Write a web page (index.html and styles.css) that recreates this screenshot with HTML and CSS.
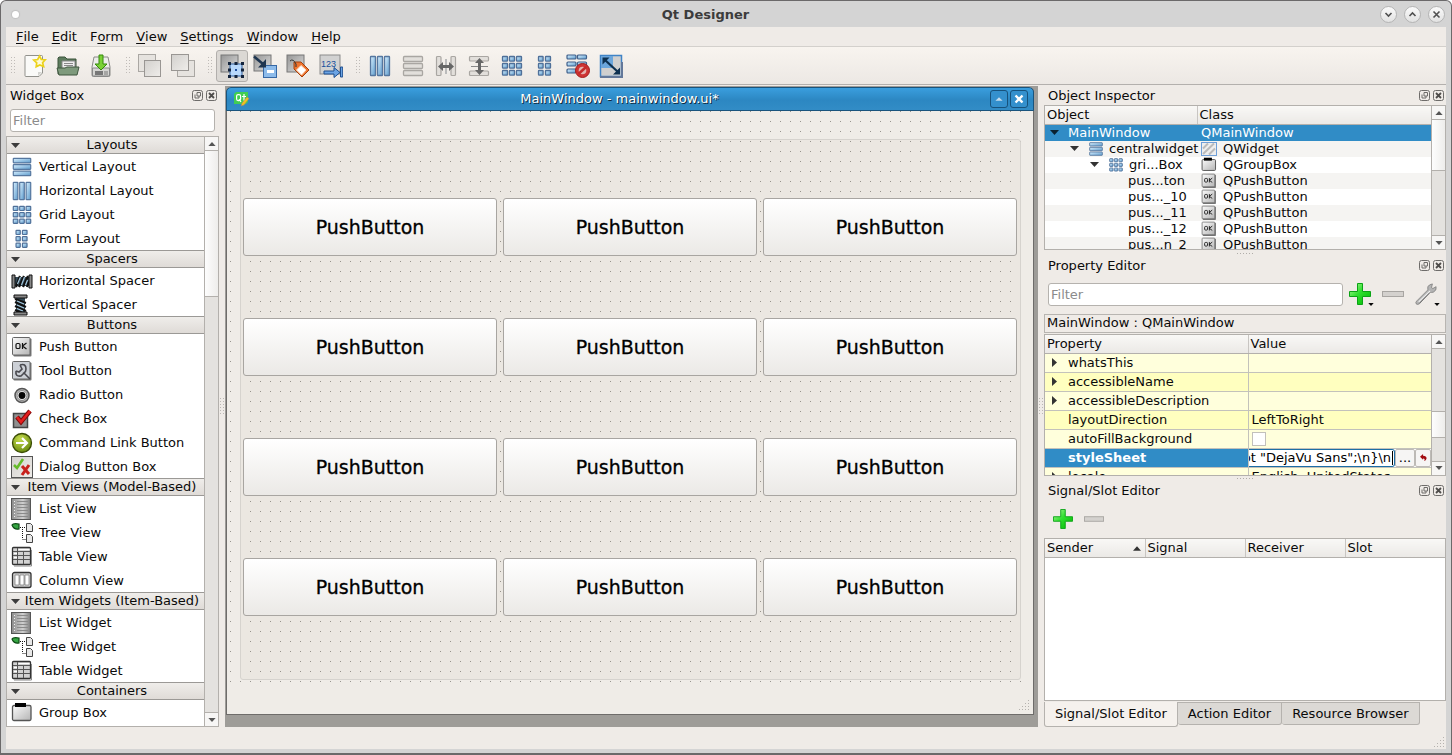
FILE: index.html
```html
<!DOCTYPE html>
<html lang="en">
<head>
<meta charset="utf-8">
<title>Qt Designer</title>
<link rel="stylesheet" href="styles.css">
</head>
<body>
<svg class="sprite" aria-hidden="true">
  <defs>
    <linearGradient id="gBlue" x1="0" y1="0" x2="1" y2="1"><stop offset="0" stop-color="#d8f0ff"/><stop offset="1" stop-color="#5c9acb"/></linearGradient>
    <linearGradient id="gGrey" x1="0" y1="0" x2="1" y2="1"><stop offset="0" stop-color="#fbfbfb"/><stop offset="1" stop-color="#b4b4b4"/></linearGradient>
    <linearGradient id="gDark" x1="0" y1="0" x2="1" y2="1"><stop offset="0" stop-color="#969696"/><stop offset="1" stop-color="#dcdcdc"/></linearGradient>
    <linearGradient id="gPale" x1="0" y1="0" x2="1" y2="1"><stop offset="0" stop-color="#d2d0cd"/><stop offset="1" stop-color="#efedea"/></linearGradient>
    <linearGradient id="gGreen" x1="0" y1="0" x2="1" y2="1"><stop offset="0" stop-color="#b9f7a0"/><stop offset=".45" stop-color="#2fe02f"/><stop offset="1" stop-color="#00b400"/></linearGradient>
    <linearGradient id="gList" x1="0" y1="0" x2="1" y2="0"><stop offset="0" stop-color="#8a8a8a"/><stop offset=".6" stop-color="#d0d0d0"/><stop offset="1" stop-color="#7c7c7c"/></linearGradient>
    <radialGradient id="gLime" cx=".4" cy=".3" r=".8"><stop offset="0" stop-color="#c6dc4e"/><stop offset="1" stop-color="#5f8207"/></radialGradient>
  </defs>
  <symbol id="i-vlayout" viewBox="-1 -1 24 24"><g fill="url(#gBlue)" stroke="#56779f" stroke-width="1.3"><rect x="1.500" y="1.500" width="19" height="5" rx=".6"/><rect x="1.500" y="8.500" width="19" height="5" rx=".6"/><rect x="1.500" y="15.500" width="19" height="5" rx=".6"/></g></symbol>
  <symbol id="i-hlayout" viewBox="-1 -1 24 24"><g fill="url(#gBlue)" stroke="#56779f" stroke-width="1.3"><rect x="1.500" y="1.500" width="5" height="19" rx=".6"/><rect x="8.500" y="1.500" width="5" height="19" rx=".6"/><rect x="15.500" y="1.500" width="5" height="19" rx=".6"/></g></symbol>
  <symbol id="i-grid" viewBox="-1 -1 24 24"><g fill="url(#gBlue)" stroke="#4f7099" stroke-width="1.3"><rect x="1.500" y="1.500" width="5" height="4.600" rx=".6"/><rect x="8.500" y="1.500" width="5" height="4.600" rx=".6"/><rect x="15.500" y="1.500" width="5" height="4.600" rx=".6"/><rect x="1.500" y="8.500" width="5" height="4.600" rx=".6"/><rect x="8.500" y="8.500" width="5" height="4.600" rx=".6"/><rect x="15.500" y="8.500" width="5" height="4.600" rx=".6"/><rect x="1.500" y="15.500" width="5" height="4.600" rx=".6"/><rect x="8.500" y="15.500" width="5" height="4.600" rx=".6"/><rect x="15.500" y="15.500" width="5" height="4.600" rx=".6"/></g></symbol>
  <symbol id="i-form" viewBox="-1 -1 24 24"><g fill="url(#gBlue)" stroke="#4f7099" stroke-width="1.3"><rect x="4.500" y="1.500" width="4.600" height="4.600" rx=".6"/><rect x="11.500" y="1.500" width="5" height="4.600" rx=".6"/><rect x="4.500" y="8.500" width="4.600" height="4.600" rx=".6"/><rect x="11.500" y="8.500" width="5" height="4.600" rx=".6"/><rect x="4.500" y="15.500" width="4.600" height="4.600" rx=".6"/><rect x="11.500" y="15.500" width="5" height="4.600" rx=".6"/></g></symbol>
  <symbol id="i-vlayout-off" viewBox="-1 -1 24 24"><g fill="#e2dfdb" stroke="#a9a6a2" stroke-width="1.3"><rect x="1.500" y="1.500" width="19" height="5" rx="1"/><rect x="1.500" y="8.500" width="19" height="5" rx="1"/><rect x="1.500" y="15.500" width="19" height="5" rx="1"/></g></symbol>
  <symbol id="i-hsplit" viewBox="-1 -1 24 24"><g fill="#e2dfdb" stroke="#a9a6a2" stroke-width="1.2"><rect x="1.500" y="1.500" width="4.500" height="19" rx="1"/><rect x="16" y="1.500" width="4.500" height="19" rx="1"/></g><path d="M10.500 4v15M11.500 4v15" stroke="#bbb" fill="none"/><path d="M3 11.500l5-4.500v3h6V7l5 4.500-5 4.500v-3H8v3z" fill="#666"/></symbol>
  <symbol id="i-vsplit" viewBox="-1 -1 24 24"><g fill="#e2dfdb" stroke="#a9a6a2" stroke-width="1.2"><rect x="1.500" y="1.500" width="19" height="4.500" rx="1"/><rect x="1.500" y="16" width="19" height="4.500" rx="1"/></g><path d="M3 11.500h17" stroke="#888" fill="none"/><path d="M11.500 3L7 8h3v7H7l4.500 5 4.500-5h-3V8h3z" fill="#666"/></symbol>
  <symbol id="i-break" viewBox="0 0 24 24"><g fill="url(#gBlue)" stroke="#3f5f8a" stroke-width="1.2"><rect x="1" y="1" width="9" height="4" rx="1"/><rect x="11.500" y="1" width="9" height="4" rx="1"/><rect x="1" y="8" width="9" height="4" rx="1"/><rect x="11.500" y="8" width="9" height="4" rx="1"/><rect x="1" y="15" width="9" height="4" rx="1"/></g><circle cx="16.500" cy="16.500" r="7" fill="#cf3434" stroke="#a31c1c"/><circle cx="16.500" cy="16.500" r="3.800" fill="#e3b4b0"/><path d="M12.500 20l8-7.500" stroke="#c42b2b" stroke-width="2.600"/></symbol>
  <symbol id="i-adjust" viewBox="0 0 24 24"><rect x="1.500" y="1.500" width="21" height="21" fill="#cfcfcf" stroke="#3f83c6" stroke-width="1.500"/><path d="M1 23h22V8" fill="none" stroke="#63789a" stroke-width="2"/><rect x="2" y="2" width="12" height="12" fill="#6ba6dc"/><path d="M6 6l13 12" stroke="#0d3050" stroke-width="2.200"/><path d="M3.500 3.500h7l-7 7zM21 20.500h-7l7-7z" fill="#0d3050"/></symbol>
  <symbol id="i-new" viewBox="0 0 24 24"><path d="M3 1.500h15.500q1 0 1 1V19l-3.500 3.500H3q-1 0-1-1v-19q0-1 1-1z" fill="#fafaf8" stroke="#91918c"/><path d="M19 18h-4v4z" fill="#d4d4d0"/><path d="M16.500 2l1.800 3.500 3.900.2-2.600 3 1 3.800-3.800-1.500-3.600 1.800.5-4-2.900-2.700 3.900-.6z" fill="#fffbd6" stroke="#ecd21a" stroke-width="1.700"/></symbol>
  <symbol id="i-open" viewBox="0 0 24 24"><path d="M2 20V4l1-1h6l2 2h9v15z" fill="#5e7c5e" stroke="#3b533b"/><path d="M6 7h13v9H6z" fill="#eee" stroke="#888"/><path d="M8 9.500h9M8 11.500h9" stroke="#888"/><path d="M1 14h8l2-1h12l-2 8H3z" fill="#7e9a7c" stroke="#3f573f"/></symbol>
  <symbol id="i-save" viewBox="0 0 24 24"><path d="M5 3h14l2 10v8q0 1.500-1.500 1.500h-15Q3 22.500 3 21v-8z" fill="#ececea" stroke="#8b8b88"/><path d="M3.500 14h17v8h-17z" fill="#d5d5d2" stroke="#888"/><rect x="6" y="17" width="8" height="4" fill="#777"/><path d="M16 17v4M18 17v4" stroke="#777"/><path d="M10 1h4v9h4l-6 6-6-6h4z" fill="#7ad136" stroke="#358a0b"/></symbol>
  <symbol id="i-raise" viewBox="0 0 24 24"><rect x=".500" y=".500" width="17" height="17" fill="#e6e3df" stroke="#aaa7a3"/><rect x="6.500" y="6.500" width="16" height="16" fill="url(#gPale)" stroke="#999693"/></symbol>
  <symbol id="i-lower" viewBox="0 0 24 24"><rect x="6.500" y="6.500" width="17" height="16" fill="#e6e3df" stroke="#aaa7a3"/><rect x=".500" y=".500" width="17" height="16" fill="url(#gPale)" stroke="#999693"/></symbol>
  <symbol id="i-widgets" viewBox="0 0 24 24"><rect x="1" y="1" width="17" height="17" fill="url(#gDark)" stroke="#777"/><rect x="10" y="10" width="12" height="12" fill="#b8d8fb" stroke="#3465a4"/><g fill="#14243c"><rect x="8" y="8" width="3" height="3"/><rect x="14.500" y="8" width="3" height="3"/><rect x="21" y="8" width="3" height="3"/><rect x="8" y="14.500" width="3" height="3"/><rect x="21" y="14.500" width="3" height="3"/><rect x="8" y="21" width="3" height="3"/><rect x="14.500" y="21" width="3" height="3"/><rect x="21" y="21" width="3" height="3"/></g><rect x="15" y="15" width="2" height="2" fill="#2050a0"/></symbol>
  <symbol id="i-signals" viewBox="0 0 24 24"><rect x="1" y="1" width="17" height="16" fill="url(#gDark)" stroke="#777"/><rect x="10.500" y="11.500" width="13" height="12" fill="#8dbbea" stroke="#3668a5"/><path d="M14 17.500h7" stroke="#fff" stroke-width="3"/><path d="M1 2.500l9 7.500" stroke="#1e3550" stroke-width="2.500"/><path d="M13 5v8.500H5z" fill="#1e3550"/></symbol>
  <symbol id="i-buddies" viewBox="0 0 24 24"><rect x="1" y="1" width="17" height="17" fill="url(#gDark)" stroke="#777"/><path d="M8 8h7l8 8-7 7-8-8z" fill="#ef7430" stroke="#a4410d"/><path d="M15 11.500l5 4.500-4.500 5-5-5z" fill="#fff" stroke="#fbd9bf"/><path d="M4 7q3-3 6 3v3" fill="none" stroke="#333"/></symbol>
  <symbol id="i-taborder" viewBox="0 0 24 24"><rect x="1" y="1" width="20" height="19" fill="#d2d2d2" stroke="#8b8b8b"/><text x="2" y="13" font-size="9" fill="#174f9c" font-family="Liberation Sans">123</text><path d="M5 17h10v-3.500l6 5-6 5V20H5zM21.500 13h2.200v10h-2.200z" fill="#6ba4e4" stroke="#1f4f8f"/></symbol>
  <symbol id="i-hspacer" viewBox="0 0 22 22"><path d="M4 7h14v9H4z" fill="#334955"/><path d="M5 17l4-11M8 17l5-11M12 17l5-11M16 17l2-6" stroke="#111" stroke-width="2.200"/><path d="M6.500 14l3-7M10.500 15l3-8M14.500 15l2-5" stroke="#a5c8df" stroke-width="1.200"/><path d="M1 5h3v13H1zM18 5h3v13h-3z" fill="#888" stroke="#111"/></symbol>
  <symbol id="i-vspacer" viewBox="0 0 22 22"><path d="M5 4h9v14H5z" fill="#334955"/><path d="M4 5l11 4M4 8l11 5M4 12l11 5M4 16l8 3" stroke="#111" stroke-width="2"/><path d="M6 7l7 3M6 11l7 3M6 14.500l6 2.500" stroke="#a5c8df" stroke-width="1.200"/><path d="M3 1h13v3H3zM3 18h13v3H3z" fill="#888" stroke="#111"/></symbol>
  <symbol id="i-ok" viewBox="0 0 22 22"><rect x="2.500" y="2.500" width="18" height="18" rx="1" fill="#777"/><rect x="1.500" y="1.500" width="17.500" height="17.500" rx="1" fill="url(#gGrey)" stroke="#666"/><g fill="none" stroke="#111" stroke-width="1.200"><rect x="5" y="7.500" width="4" height="5" rx="1.300"/><path d="M11.500 7v6M15.500 7l-4 3 4 3"/></g></symbol>
  <symbol id="i-tool" viewBox="0 0 22 22"><rect x="2.500" y="2.500" width="18" height="18" rx="1" fill="#777"/><rect x="1.500" y="1.500" width="17.500" height="17.500" rx="1" fill="#ccd0d6" stroke="#666"/><path d="M9 5q6-2 6 4 0 3-2 4l6 6M5 11q-1 6 5 5l4-4M9 5l2 4-3 3-3-1" fill="none" stroke="#4a4a50" stroke-width="1.600"/></symbol>
  <symbol id="i-radio" viewBox="0 0 22 22"><circle cx="11" cy="11.500" r="7" fill="#bbb" stroke="#555" stroke-width="1.500"/><circle cx="11" cy="11.500" r="5" fill="#e6e6e6" stroke="#888"/><circle cx="11" cy="11.500" r="3.400" fill="#050505"/></symbol>
  <symbol id="i-check" viewBox="0 0 22 22"><rect x="2.500" y="5.500" width="14" height="14" fill="#8f8f8f" stroke="#444" stroke-width="1.500"/><path d="M6 9l4 5L19 3" fill="none" stroke="#7e0808" stroke-width="4.500"/><path d="M6 9l4 5L19 3" fill="none" stroke="#e51e1e" stroke-width="2.600"/></symbol>
  <symbol id="i-cmd" viewBox="0 0 22 22"><circle cx="11" cy="11" r="9.500" fill="url(#gLime)" stroke="#3b4c05" stroke-width="1.300"/><path d="M5 11h10M11 6l5 5-5 5" fill="none" stroke="#fff" stroke-width="2.200"/></symbol>
  <symbol id="i-dialog" viewBox="0 0 22 22"><rect x=".500" y=".500" width="21" height="21" fill="url(#gPale)" stroke="#555"/><path d="M3 9l3 3 6-9" fill="none" stroke="#65bb2b" stroke-width="2.600"/><path d="M11 10l7 8M18 9l-7 10" stroke="#c8201c" stroke-width="3"/></symbol>
  <symbol id="i-list" viewBox="0 0 22 22"><rect x=".500" y=".500" width="19" height="21" fill="url(#gList)" stroke="#555"/><path d="M3 3.500h1M3 6.500h1M3 9.500h1M3 12.500h1M3 15.500h1M3 18.500h1" stroke="#eee"/><path d="M6 3.500h11M6 6.500h11M6 9.500h11M6 12.500h11M6 15.500h11M6 18.500h11" stroke="#8a8a8a"/></symbol>
  <symbol id="i-tree" viewBox="0 0 22 22"><path d="M1 3q1-2 7-1v5q-5 1-7-4z" fill="#35a542" stroke="#0c4a14" stroke-width="1.200"/><path d="M9 5.500h6M11.500 5v12M11.500 17.500h4" stroke="#111" stroke-dasharray="1 1" fill="none"/><path d="M15.500 1.500h4l2 2v6h-6zM15.500 12.500h4l2 2v6h-6z" fill="#e8e8e8" stroke="#444"/></symbol>
  <symbol id="i-table" viewBox="0 0 22 22"><rect x="1.500" y="1.500" width="18" height="17" rx="1" fill="#d2d2d2" stroke="#333" stroke-width="1.300"/><path d="M2 5.500h17M2 9.500h17M2 13.500h17M6.500 2v16M12.500 5v13" stroke="#555" fill="none"/><path d="M3 20h17.500V4" stroke="#888" fill="none"/><path d="M7.500 3.500h11M3 7.500h3M3 11.500h3" stroke="#fff"/></symbol>
  <symbol id="i-column" viewBox="0 0 22 22"><rect x="1.500" y="2.500" width="18.500" height="15" rx="2" fill="#ccc" stroke="#333" stroke-width="1.300"/><path d="M4 5h4v10H4zM9 5h4v10H9zM14 5h4v10h-4z" fill="#fff" stroke="#777" stroke-width=".700"/></symbol>
  <symbol id="i-group" viewBox="0 0 22 22"><rect x="1.500" y="3.500" width="18.500" height="15" rx="1.500" fill="url(#gGrey)" stroke="#555" stroke-width="1.300"/><rect x="4" y="1" width="11" height="4" fill="#000"/></symbol>
  <symbol id="i-toolbox" viewBox="0 0 22 22"><rect x="1.500" y="1.500" width="18" height="18" fill="#aaa" stroke="#333" stroke-width="2"/></symbol>
  <symbol id="i-qwidget" viewBox="0 0 16 16"><rect x=".500" y="1.500" width="15" height="13" fill="#eee" stroke="#6f9fd8"/><path d="M2 13L13 2.500M2 7.500l5-5M8 13.500l6-6" stroke="#bbb" stroke-width="2"/></symbol>
  <symbol id="i-float" viewBox="0 0 12 12"><rect x=".500" y=".500" width="10" height="10" rx="2" fill="none" stroke="#6e6c6a"/><path d="M5 2.500h3.500V6H5zM3 4.500V8h4V6" fill="none" stroke="#6e6c6a"/></symbol>
  <symbol id="i-close" viewBox="0 0 12 12"><rect x=".500" y=".500" width="10" height="10" rx="2" fill="none" stroke="#6e6c6a"/><path d="M3 3l5 5M8 3L3 8" stroke="#4e4c4a" stroke-width="1.800"/></symbol>
  <symbol id="i-down" viewBox="0 0 9 5"><path d="M0 0h9L4.500 5z" fill="currentColor"/></symbol>
  <symbol id="i-up" viewBox="0 0 9 5"><path d="M0 5h9L4.500 0z" fill="currentColor"/></symbol>
  <symbol id="i-right" viewBox="0 0 5 9"><path d="M0 0v9l5-4.500z" fill="currentColor"/></symbol>
  <symbol id="i-plus" viewBox="0 0 22 22"><path d="M8.500.500h5v8h8v5h-8v8h-5v-8h-8v-5h8z" fill="url(#gGreen)" stroke="#0aa315"/></symbol>
  <symbol id="i-minus" viewBox="0 0 22 22"><rect x=".500" y="8.500" width="21" height="5" fill="#d4d1ce" stroke="#a8a5a2"/></symbol>
  <symbol id="i-wrench" viewBox="0 0 24 24"><path d="M1.500 23q-1.500-2 .500-3.500L14 7.500q-1-4 2-5.500l3-1-1 4 1.500 1L23 4q1 4-3 6-2 .500-4 0L5 22.500q-2 1.500-3.500.500z" fill="#b4b4b4" stroke="#777" stroke-width=".800"/><path d="M4 20.500L16.500 8.500" stroke="#f2f2f2" stroke-width="1.200"/><path d="M5 22L16 11" stroke="#6a6a6a"/></symbol>
  <symbol id="i-reset" viewBox="0 0 8 8"><path d="M0 3l3.500-3v2q4 0 4 3-.500 2.500-3 3 2-3-1-3v1.500z" fill="#a30d12"/></symbol>
  <symbol id="i-grip" viewBox="0 0 12 12"><g fill="#b5b2ae"><path d="M10 1h1v1h-1zM10 4h1v1h-1zM7 4h1v1H7zM10 7h1v1h-1zM7 7h1v1H7zM4 7h1v1H4zM10 10h1v1h-1zM7 10h1v1H7zM4 10h1v1H4zM1 10h1v1H1z"/></g></symbol>
</svg>

<div class="window">
  <header class="titlebar">
    <span class="pin"></span>
    <h1>Qt Designer</h1>
    <div class="winctl">
      <button aria-label="Minimize"><svg viewBox="0 0 17 17"><path d="M5.500 7l3 3 3-3"/></svg></button>
      <button aria-label="Maximize"><svg viewBox="0 0 17 17"><path d="M5.500 10l3-3 3 3"/></svg></button>
      <button aria-label="Close"><svg viewBox="0 0 17 17"><path d="M5.500 5.500l6 6M11.500 5.500l-6 6"/></svg></button>
    </div>
  </header>
  <div class="client">
    <nav class="menubar">
      <button><u>F</u>ile</button><button><u>E</u>dit</button><button>F<u>o</u>rm</button><button><u>V</u>iew</button><button><u>S</u>ettings</button><button><u>W</u>indow</button><button><u>H</u>elp</button>
    </nav>
    <div class="toolbar">
      <span class="handle"></span>
      <button aria-label="New"><svg><use href="#i-new"/></svg></button>
      <button aria-label="Open"><svg><use href="#i-open"/></svg></button>
      <button aria-label="Save"><svg><use href="#i-save"/></svg></button>
      <span class="handle"></span>
      <button aria-label="Bring to front"><svg><use href="#i-raise"/></svg></button>
      <button aria-label="Send to back"><svg><use href="#i-lower"/></svg></button>
      <span class="handle"></span>
      <button class="on" aria-label="Edit widgets"><svg><use href="#i-widgets"/></svg></button>
      <button aria-label="Edit signals"><svg><use href="#i-signals"/></svg></button>
      <button aria-label="Edit buddies"><svg><use href="#i-buddies"/></svg></button>
      <button aria-label="Edit tab order"><svg><use href="#i-taborder"/></svg></button>
      <span class="handle"></span>
      <button aria-label="Lay out horizontally"><svg><use href="#i-hlayout"/></svg></button>
      <button aria-label="Lay out vertically"><svg><use href="#i-vlayout-off"/></svg></button>
      <button aria-label="Horizontal splitter"><svg><use href="#i-hsplit"/></svg></button>
      <button aria-label="Vertical splitter"><svg><use href="#i-vsplit"/></svg></button>
      <button aria-label="Lay out in a grid"><svg><use href="#i-grid"/></svg></button>
      <button aria-label="Lay out in a form"><svg><use href="#i-form"/></svg></button>
      <button aria-label="Break layout"><svg><use href="#i-break"/></svg></button>
      <button aria-label="Adjust size"><svg><use href="#i-adjust"/></svg></button>
    </div>

    <main class="work">
      <section class="dock left">
        <div class="dock-title"><h2>Widget Box</h2><button aria-label="Float"><svg><use href="#i-float"/></svg></button><button aria-label="Close"><svg><use href="#i-close"/></svg></button></div>
        <input class="filter" type="text" placeholder="Filter" aria-label="Filter widgets">
        <div class="view widget-view">
          <div class="scroll-area">
            <h3><svg><use href="#i-down"/></svg>Layouts</h3>
            <ul><li><svg><use href="#i-vlayout"/></svg>Vertical Layout</li><li><svg><use href="#i-hlayout"/></svg>Horizontal Layout</li><li><svg><use href="#i-grid"/></svg>Grid Layout</li><li><svg><use href="#i-form"/></svg>Form Layout</li></ul>
            <h3><svg><use href="#i-down"/></svg>Spacers</h3>
            <ul><li><svg><use href="#i-hspacer"/></svg>Horizontal Spacer</li><li><svg><use href="#i-vspacer"/></svg>Vertical Spacer</li></ul>
            <h3><svg><use href="#i-down"/></svg>Buttons</h3>
            <ul><li><svg><use href="#i-ok"/></svg>Push Button</li><li><svg><use href="#i-tool"/></svg>Tool Button</li><li><svg><use href="#i-radio"/></svg>Radio Button</li><li><svg><use href="#i-check"/></svg>Check Box</li><li><svg><use href="#i-cmd"/></svg>Command Link Button</li><li><svg><use href="#i-dialog"/></svg>Dialog Button Box</li></ul>
            <h3><svg><use href="#i-down"/></svg>Item Views (Model-Based)</h3>
            <ul><li><svg><use href="#i-list"/></svg>List View</li><li><svg><use href="#i-tree"/></svg>Tree View</li><li><svg><use href="#i-table"/></svg>Table View</li><li><svg><use href="#i-column"/></svg>Column View</li></ul>
            <h3><svg><use href="#i-down"/></svg>Item Widgets (Item-Based)</h3>
            <ul><li><svg><use href="#i-list"/></svg>List Widget</li><li><svg><use href="#i-tree"/></svg>Tree Widget</li><li><svg><use href="#i-table"/></svg>Table Widget</li></ul>
            <h3><svg><use href="#i-down"/></svg>Containers</h3>
            <ul><li><svg><use href="#i-group"/></svg>Group Box</li><li><svg><use href="#i-toolbox"/></svg></li></ul>
          </div>
          <div class="scrollbar"><button aria-label="Scroll up"><svg><use href="#i-up"/></svg></button><div class="track"><i class="thumb" style="height:26%"></i></div><button aria-label="Scroll down"><svg><use href="#i-down"/></svg></button></div>
        </div>
      </section>
      <div class="vsplit"><span class="grip-v"></span></div>

      <section class="mdi">
        <div class="sub">
          <div class="sub-title">
            <svg class="logo" viewBox="0 0 16 16"><path d="M3 1h12v10l-2 2H1V3z" fill="#41cd52"/><g fill="none" stroke="#fff" stroke-width="1.200"><rect x="3.600" y="3.600" width="4" height="6" rx="1.500"/><path d="M6 8l2 3M11 3v6l1.500.600M9 5.500h4"/></g><path d="M8 15l1-3 5-6 2 1.500-5 6.500z" fill="#f5c21c" stroke="#9a8a70" stroke-width=".600"/></svg>
            <h2>MainWindow - mainwindow.ui*</h2>
            <button aria-label="Shade"><svg viewBox="0 0 18 18"><path d="M5 11l4-4 4 4z" fill="#c5dced"/></svg></button>
            <button aria-label="Close form"><svg viewBox="0 0 18 18"><path d="M6 6l6 6M12 6l-6 6" stroke="#fff" stroke-width="2.600" stroke-linecap="square"/></svg></button>
          </div>
          <div class="central">
            <div class="group">
              <button>PushButton</button><button>PushButton</button><button>PushButton</button>
              <button>PushButton</button><button>PushButton</button><button>PushButton</button>
              <button>PushButton</button><button>PushButton</button><button>PushButton</button>
              <button>PushButton</button><button>PushButton</button><button>PushButton</button>
            </div>
          </div>
          <div class="sub-status"><svg class="grip"><use href="#i-grip"/></svg></div>
        </div>
      </section>
      <div class="vsplit"><span class="grip-v"></span></div>

      <div class="right">
        <section class="dock inspector">
          <div class="dock-title"><h2>Object Inspector</h2><button aria-label="Float"><svg><use href="#i-float"/></svg></button><button aria-label="Close"><svg><use href="#i-close"/></svg></button></div>
          <div class="view">
            <div class="scroll-area">
              <table class="objects">
                <colgroup><col class="c-object"><col></colgroup>
                <thead><tr><th>Object</th><th>Class</th></tr></thead>
                <tbody>
                  <tr class="sel"><td><div class="cell"><svg class="arrow"><use href="#i-down"/></svg>MainWindow</div></td><td><div class="cell cls">QMainWindow</div></td></tr>
                  <tr><td><div class="cell l1"><svg class="arrow"><use href="#i-down"/></svg><svg class="ic"><use href="#i-vlayout"/></svg>centralwidget</div></td><td><div class="cell cls"><svg class="ic"><use href="#i-qwidget"/></svg>QWidget</div></td></tr>
                  <tr><td><div class="cell l2"><svg class="arrow"><use href="#i-down"/></svg><svg class="ic"><use href="#i-grid"/></svg>gri...Box</div></td><td><div class="cell cls"><svg class="ic"><use href="#i-group"/></svg>QGroupBox</div></td></tr>
                  <tr><td><div class="cell l3">pus...ton</div></td><td><div class="cell cls"><svg class="ic"><use href="#i-ok"/></svg>QPushButton</div></td></tr>
                  <tr><td><div class="cell l3">pus..._10</div></td><td><div class="cell cls"><svg class="ic"><use href="#i-ok"/></svg>QPushButton</div></td></tr>
                  <tr><td><div class="cell l3">pus..._11</div></td><td><div class="cell cls"><svg class="ic"><use href="#i-ok"/></svg>QPushButton</div></td></tr>
                  <tr><td><div class="cell l3">pus..._12</div></td><td><div class="cell cls"><svg class="ic"><use href="#i-ok"/></svg>QPushButton</div></td></tr>
                  <tr><td><div class="cell l3">pus...n_2</div></td><td><div class="cell cls"><svg class="ic"><use href="#i-ok"/></svg>QPushButton</div></td></tr>
                </tbody>
              </table>
            </div>
            <div class="scrollbar"><button aria-label="Scroll up"><svg><use href="#i-up"/></svg></button><div class="track"><i class="thumb" style="height:44%"></i></div><button aria-label="Scroll down"><svg><use href="#i-down"/></svg></button></div>
          </div>
        </section>
        <div class="hsplit"><span class="grip-h"></span></div>

        <section class="dock properties">
          <div class="dock-title"><h2>Property Editor</h2><button aria-label="Float"><svg><use href="#i-float"/></svg></button><button aria-label="Close"><svg><use href="#i-close"/></svg></button></div>
          <div class="prop-bar">
            <input class="filter" type="text" placeholder="Filter" aria-label="Filter properties">
            <button aria-label="Add property"><svg class="big"><use href="#i-plus"/></svg><svg class="mini"><use href="#i-down"/></svg></button>
            <button aria-label="Remove property"><svg class="big"><use href="#i-minus"/></svg></button>
            <button aria-label="Configure"><svg class="big"><use href="#i-wrench"/></svg><svg class="mini"><use href="#i-down"/></svg></button>
          </div>
          <div class="object-label">MainWindow : QMainWindow</div>
          <div class="view">
            <div class="scroll-area">
              <table class="props">
                <colgroup><col class="c-prop"><col></colgroup>
                <thead><tr><th>Property</th><th>Value</th></tr></thead>
                <tbody>
                  <tr><td><div class="cell"><svg class="arrow-r"><use href="#i-right"/></svg>whatsThis</div></td><td></td></tr>
                  <tr><td><div class="cell"><svg class="arrow-r"><use href="#i-right"/></svg>accessibleName</div></td><td></td></tr>
                  <tr><td><div class="cell"><svg class="arrow-r"><use href="#i-right"/></svg>accessibleDescription</div></td><td></td></tr>
                  <tr><td><div class="cell leaf">layoutDirection</div></td><td><div class="cell val">LeftToRight</div></td></tr>
                  <tr><td><div class="cell leaf"><label for="autofill">autoFillBackground</label></div></td><td><div class="cell val"><input id="autofill" type="checkbox"></div></td></tr>
                  <tr class="sel"><td><div class="cell leaf"><label for="sheet">styleSheet</label></div></td><td><div class="cell edit"><span class="field"><input id="sheet" type="text" value='pt "DejaVu Sans";\n}\n'><i class="caret"></i></span><button>...</button><button class="reset" aria-label="Reset"><svg><use href="#i-reset"/></svg></button></div></td></tr>
                  <tr><td><div class="cell"><svg class="arrow-r"><use href="#i-right"/></svg>locale</div></td><td><div class="cell val">English, UnitedStates</div></td></tr>
                </tbody>
              </table>
            </div>
            <div class="scrollbar"><button aria-label="Scroll up"><svg><use href="#i-up"/></svg></button><div class="track"><i class="thumb" style="height:24%;margin-top:62px"></i></div><button aria-label="Scroll down"><svg><use href="#i-down"/></svg></button></div>
          </div>
        </section>
        <div class="hsplit"><span class="grip-h"></span></div>

        <section class="dock signals">
          <div class="dock-title"><h2>Signal/Slot Editor</h2><button aria-label="Float"><svg><use href="#i-float"/></svg></button><button aria-label="Close"><svg><use href="#i-close"/></svg></button></div>
          <div class="sig-bar"><button aria-label="Add connection"><svg><use href="#i-plus"/></svg></button><button aria-label="Remove connection"><svg><use href="#i-minus"/></svg></button></div>
          <div class="view">
            <table class="conns"><thead><tr><th><span>Sender</span><svg><use href="#i-up"/></svg></th><th>Signal</th><th>Receiver</th><th>Slot</th></tr></thead></table>
          </div>
          <div class="tabs"><button class="cur">Signal/Slot Editor</button><button>Action Editor</button><button>Resource Browser</button></div>
        </section>
      </div>
    </main>
    <footer class="status"><svg class="grip"><use href="#i-grip"/></svg></footer>
  </div>
</div>
</body>
</html>
```
FILE: styles.css
```css
* { box-sizing: border-box; }
body {
  margin: 0;
  background: #fff;
  font: 13px/16px "DejaVu Sans", sans-serif;
  color: #0a0a0a;
}
h1, h2, h3, ul { margin: 0; padding: 0; font: inherit; list-style: none; }
button, input { font: inherit; color: inherit; margin: 0; }
button { padding: 0; border: 0; background: none; display: flex; align-items: center; justify-content: center; }
svg { display: block; flex: none; overflow: visible; }
.sprite { position: absolute; width: 0; height: 0; }

.window {
  height: 100vh;
  display: flex;
  flex-direction: column;
  border: 1px solid #6b696a;
  border-bottom-width: 2px;
  border-radius: 6px 6px 0 0;
  background: #d4d4d4;
  padding: 0 5px 4px;
}
.titlebar { flex: none; height: 26px; display: flex; align-items: center; }
.pin { width: 7px; height: 7px; margin: 0 12px 0 6px; border-radius: 50%; background: #fff; box-shadow: 0 0 1px 1px #c2c2c2; }
.titlebar h1 { flex: 1; text-align: center; font-weight: bold; color: #3c3c3c; padding-top: 1px; }
.winctl { display: flex; gap: 7px; padding-right: 1px; }
.winctl button { width: 17px; height: 17px; border-radius: 50%; border: 1px solid #b4b4b4; background: linear-gradient(#fafafa, #e2e2e2); }
.winctl svg { width: 17px; height: 17px; fill: none; stroke: #505050; stroke-width: 1.6; }

.client { flex: 1; min-height: 0; display: flex; flex-direction: column; background: #efebe7; }
.menubar { flex: none; height: 20px; display: flex; padding-left: 3px; border-bottom: 1px solid #d3d0cc; }
.menubar button { padding: 0 6px 0 7px; }
.menubar u { text-underline-offset: 2px; }
.toolbar {
  flex: none; height: 38px; display: flex; align-items: center; gap: 1px;
  background: linear-gradient(#f8f4ef, #ece8e4);
  border-bottom: 1px solid #b3b0ad;
}
.toolbar button { width: 32px; height: 32px; border: 1px solid transparent; border-radius: 3px; }
.toolbar button.on { border-color: #b2afac; background: #dbd8d4; }
.toolbar svg { width: 24px; height: 24px; }
.handle {
  width: 5px; height: 17px; margin: 0 2px 0 8px;
  background: conic-gradient(at 1px 1px, transparent 75%, #c0bcb8 75%) 0 0 / 3px 3px;
}
.handle:first-child { margin-left: 5px; }

.work { flex: 1; min-height: 0; display: flex; padding-top: 1px; }
.dock { display: flex; flex-direction: column; min-height: 0; }
.left { width: 213px; flex: none; }
.dock-title { flex: none; height: 19px; display: flex; align-items: center; gap: 3px; padding: 0 2px 0 4px; }
.dock-title h2 { flex: 1; }
.dock-title button, .dock-title svg { width: 11px; height: 11px; }
.dock-title svg { width: 12px; height: 12px; }
.filter {
  height: 23px; width: 100%; padding: 0 2px;
  background: #fff; border: 1px solid #b5b2ae; border-radius: 3px; outline: 0;
}
.filter::placeholder { color: #8b8b8b; opacity: 1; }
.left .filter { width: auto; flex: none; margin: 4px 4px 4px; }
.view { flex: 1; min-height: 0; display: flex; border: 1px solid #b3b0ac; background: #fff; overflow: hidden; }
.scroll-area { flex: 1; min-width: 0; overflow: hidden; }
.widget-view h3 {
  height: 18px; display: flex; align-items: center; justify-content: center;
  border: solid #9b9996; border-width: 1px 0;
  background: linear-gradient(#efedea, #dfdbd7);
}
.widget-view h3:first-child { height: 17px; border-top: 0; }
.widget-view h3 svg { width: 9px; height: 5px; margin-left: 4px; margin-right: auto; color: #3c3c3c; }
.widget-view h3::after { content: ""; width: 0; margin-right: auto; }
.widget-view li { height: 24px; display: flex; align-items: center; gap: 6px; padding: 1px 0 0 4px; }
.widget-view li svg { width: 22px; height: 22px; }

.scrollbar { flex: none; width: 14px; display: flex; flex-direction: column; border-left: 1px solid #b3b0ac; background: #e4e2df; }
.scrollbar button { height: 14px; background: #f7f6f5; border-bottom: 1px solid #b3b0ac; color: #555; }
.scrollbar button:last-child { border-bottom: 0; border-top: 1px solid #b3b0ac; }
.scrollbar svg { width: 8px; height: 4px; }
.track { flex: 1; min-height: 0; }
.thumb { display: block; background: linear-gradient(90deg, #fdfdfd, #eeedeb); border-bottom: 1px solid #b3b0ac; }
.scrollbar .thumb[style*="margin"] { border-top: 1px solid #b3b0ac; }

.vsplit { flex: none; width: 6px; display: flex; align-items: center; justify-content: center; }
.grip-v { width: 4px; height: 17px; background: conic-gradient(at 1px 1px, transparent 75%, #bbb8b4 75%) 0 0 / 3px 3px; }
.hsplit { flex: none; height: 6px; display: flex; align-items: center; justify-content: center; }
.grip-h { width: 17px; height: 1px; background: conic-gradient(at 1px 1px, transparent 75%, #b0ada9 75%) 0 0 / 3px 3px; }

.mdi { flex: 1; min-width: 0; display: flex; background: #9e9c98; padding: 1px 4px 12px 1px; }
.sub { flex: 1; min-width: 0; display: flex; flex-direction: column; border: 1px solid #6e6c6a; border-top: 0; border-radius: 5px 5px 0 0; background: #efece7; }
.sub-title {
  flex: none; height: 24px; display: flex; align-items: center; gap: 2px; margin: 0 -1px; padding: 0 5px 0 6px;
  border: 1px solid #19547d; border-radius: 5px 5px 0 0;
  background: linear-gradient(#3a9ede, #2c87c2 55%, #328cc6);
}
.logo { width: 16px; height: 16px; }
.sub-title h2 { flex: 1; text-align: center; color: #fff; text-shadow: 1px 1px 0 #102a3c; }
.sub-title button { width: 18px; height: 18px; border: 1px solid #17527c; border-radius: 3px; background: #3490cd; }
.sub-title button svg { width: 16px; height: 16px; }
.central {
  flex: 1; min-height: 0; display: flex; margin-right: 12px; padding: 28px 0 2px 13px;
  background: conic-gradient(at 1px 1px, transparent 75%, #98958f 75%) 3px 0 / 10px 10px;
}
.group {
  flex: 1; display: grid; grid-template-columns: repeat(3, 1fr); gap: 62px 6px; align-content: center;
  padding: 0 3px 5px 2px; border: 1px solid #d6d3ce; border-radius: 3px; background: rgba(120, 90, 50, .03);
}
.group button {
  height: 58px; border: 1px solid #a8a5a1; border-radius: 3px;
  background: linear-gradient(#fff, #ebe9e6); font-size: 19px; line-height: 22px; color: #000;
  -webkit-text-stroke: .3px #000;
}
.sub-status { flex: none; height: 32px; display: flex; justify-content: flex-end; align-items: flex-end; padding: 0 3px 3px 0; }
.grip { width: 12px; height: 12px; }

.right { flex: none; width: 402px; display: flex; flex-direction: column; }
.inspector { flex: 164 1 0; }
.properties { flex: 219 1 0; }
.signals { flex: 245 1 0; }
table { width: 100%; border-collapse: collapse; table-layout: fixed; }
th {
  height: 18px; padding: 0 0 0 2px; text-align: left; font-weight: normal;
  border-right: 1px solid #c8c5c2; border-bottom: 1px solid #b3b0ac;
  background: linear-gradient(#f9f8f6, #ebe9e6);
}
th:last-child { border-right: 0; }
td { padding: 0; }
.c-object { width: 152px; }
.c-prop { width: 203px; }
.cell { display: flex; align-items: center; white-space: nowrap; }
.arrow { width: 9px; height: 5px; margin-right: 9px; color: #333; }
.objects .cell { height: 16px; padding-left: 5px; }
.objects .cell.l1 { padding-left: 25px; }
.objects .cell.l2 { padding-left: 45px; }
.objects .cell.l3 { padding-left: 83px; }
.objects .cell.cls { padding-left: 4px; }
.ic { width: 16px; height: 16px; margin-right: 6px; }
.l1 .ic, .l2 .ic { margin-right: 5px; }
.objects tbody tr:nth-child(even) { background: #f5f4f2; }
.objects tbody tr.sel, .props tbody tr.sel { background: #308cc6; color: #fff; }
.sel .arrow { color: #0a2130; }

.prop-bar { flex: none; height: 38px; display: flex; align-items: center; padding: 0 4px; }
.prop-bar .filter { flex: 1; width: auto; min-width: 0; margin-right: 0; }
.prop-bar button { width: 33px; height: 28px; position: relative; }
.big { width: 22px; height: 22px; }
.mini { position: absolute; right: 2px; bottom: 2px; width: 6px; height: 3px; }
.object-label { flex: none; height: 19px; margin: 1px 0; padding-left: 2px; border: 1px solid #b8b5b1; }
.props td { height: 19px; border-bottom: 1px solid #c3c2bb; }
.props td + td { border-left: 1px solid #c3c2bb; }
.props tbody tr { background: #ffffbf; }
.props tbody tr:nth-child(odd) { background: #ffffdc; }
.props .cell { height: 18px; padding-left: 7px; }
.arrow-r { width: 5px; height: 9px; margin-right: 11px; color: #333; }
.props .cell.leaf { padding-left: 23px; }
.props .cell.val { padding-left: 3px; }
.sel label { font-weight: bold; }
.props input[type="checkbox"] { appearance: none; width: 14px; height: 14px; border: 1px solid #c2c0bb; background: #fff; }
.props .cell.edit { padding: 0; background: #fff; color: #000; }
.field { flex: 1; min-width: 0; height: 18px; display: flex; align-items: center; border: 1px solid #1c6ea6; border-left: 0; border-radius: 0 3px 3px 0; padding-right: 1px; }
.field input { flex: 1; min-width: 0; border: 0; padding: 0; height: 16px; background: none; outline: 0; text-indent: -6px; }
.caret { width: 1px; height: 14px; background: #000; }
.edit button { width: 20px; height: 18px; border: 1px solid #bdbab6; border-radius: 2px; background: #f6f5f4; }
.edit .reset { width: 16px; }
.reset svg { width: 7px; height: 7px; }

.sig-bar { flex: none; height: 37px; display: flex; align-items: center; gap: 11px; padding-left: 9px; }
.sig-bar svg { width: 20px; height: 20px; }
.signals .view { align-items: flex-start; }
.conns th { height: 19px; }
.conns svg { float: right; width: 8px; height: 5px; margin: 6px 4px 0 0; color: #333; }
.tabs { flex: none; height: 25px; margin-top: 1px; display: flex; align-items: flex-start; }
.tabs button { height: 23px; padding: 0 10px; border: 1px solid #b5b2ae; border-left: 0; border-radius: 0 0 3px 3px; background: #dcd9d5; }
.tabs .cur { height: 25px; border-left: 1px solid #b5b2ae; border-top: 0; background: #f5f1ed; }
.status { flex: none; height: 22px; display: flex; justify-content: flex-end; align-items: flex-end; padding: 0 1px 1px 0; }
```
